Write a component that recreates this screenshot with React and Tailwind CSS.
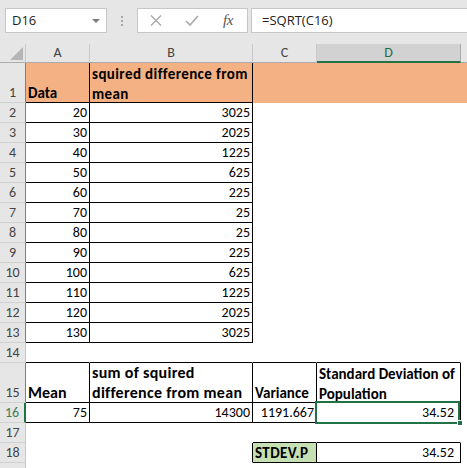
import React from "react";

const base = "flex items-end whitespace-nowrap border-r border-b";
const ALL = "border-black";
const NONE = "border-transparent";
const ONLYB = "border-r-transparent border-b-black";
const ONLYR = "border-r-black border-b-transparent";

function RH({ n, cls, txt = "text-[#444]" }) {
  return (
    <div className={`flex items-end justify-center border-b border-b-[#d0d0d0] bg-[#e6e6e6] text-[14px] leading-[14px] pb-[2px] ${cls} ${txt}`}>
      {n}
    </div>
  );
}

function C({ cls, children }) {
  return <div className={`${base} ${cls}`}>{children}</div>;
}

function Num({ cls, v, pr = "pr-[2px]" }) {
  return (
    <div className={`${base} ${cls} justify-end ${pr} leading-[14px] pb-[2px]`}>{v}</div>
  );
}

const data = [
  [20, 3025],
  [30, 2025],
  [40, 1225],
  [50, 625],
  [60, 225],
  [70, 25],
  [80, 25],
  [90, 225],
  [100, 625],
  [110, 1225],
  [120, 2025],
  [130, 3025],
];

export default function App() {
  return (
    <div className="w-[467px] h-[468px] overflow-hidden bg-white font-[Carlito,Lato,sans-serif] text-[14px] text-black">
      {/* formula bar */}
      <div className="h-[44px] bg-[#e6e6e6] flex items-start pt-[8px] font-['Open_Sans',sans-serif]">
        <div className="ml-[5px] w-[102px] h-[25px] bg-white border border-[#c6c6c6] flex items-center justify-between pl-[6px] pr-[6px]">
          <span className="text-[13px] text-[#222] leading-none">D16</span>
          <svg width="8" height="4" viewBox="0 0 8 4">
            <path d="M0 0 L8 0 L4 4 Z" fill="#7b7b7b" />
          </svg>
        </div>
        <div className="ml-[14px] mt-[8px] flex flex-col gap-[2px]">
          <div className="w-[2px] h-[2px] bg-[#a8a8a8]" />
          <div className="w-[2px] h-[2px] bg-[#a8a8a8]" />
          <div className="w-[2px] h-[2px] bg-[#a8a8a8]" />
        </div>
        <div className="ml-[14px] w-[111px] h-[25px] bg-white border border-[#c6c6c6] flex items-center pl-[12px] gap-[23px]">
          <svg width="12" height="11" viewBox="0 0 12 11">
            <path d="M1 0.5 L11 10.5 M11 0.5 L1 10.5" stroke="#a9a9a9" strokeWidth="1.4" fill="none" />
          </svg>
          <svg width="14" height="11" viewBox="0 0 14 11">
            <path d="M1 6 L5 10 L13 1" stroke="#a9a9a9" strokeWidth="1.6" fill="none" />
          </svg>
          <span className="ml-[1px] font-['Liberation_Serif',serif] italic text-[15px] text-[#555] leading-none tracking-[-0.5px]">fx</span>
        </div>
        <div className="ml-[3px] flex-1 h-[25px] bg-white border-y border-l border-[#c6c6c6] flex items-center pl-[10px]">
          <span className="text-[13px] text-[#222] leading-none">=SQRT(C16)</span>
        </div>
      </div>

      {/* grid */}
      <div className="grid grid-cols-[26px_64px_163px_64px_144px_1fr] grid-rows-[19px_40px_repeat(13,20px)_40px_20px_20px_20px_20px]">
        {/* header row */}
        <div className="relative bg-[#e6e6e6] border-r border-b border-r-[#c8c8c8] border-b-[#ababab]">
          <svg className="absolute left-[10px] top-[3px]" width="13" height="13" viewBox="0 0 13 13">
            <path d="M13 0 L13 13 L0 13 Z" fill="#b5b5b5" />
          </svg>
        </div>
        <div className="flex items-center justify-center bg-[#e6e6e6] border-r border-b border-r-[#c8c8c8] border-b-[#ababab] text-[#444] leading-none">A</div>
        <div className="flex items-center justify-center bg-[#e6e6e6] border-r border-b border-r-[#c8c8c8] border-b-[#ababab] text-[#444] leading-none">B</div>
        <div className="flex items-center justify-center bg-[#e6e6e6] border-r border-b border-r-[#c8c8c8] border-b-[#ababab] text-[#444] leading-none">C</div>
        <div className="flex items-center justify-center bg-[#d2d2d2] border-r border-r-[#ababab] border-b-2 border-b-[#217346] text-[#1e6b41] leading-none">D</div>
        <div className="bg-[#e6e6e6] border-b border-b-[#ababab]" />

        {/* row 1 */}
        <RH n="1" cls="border-r border-r-[#7f7f7f]" />
        <C cls={`${ALL} bg-[#f4b183] font-bold pl-[2px] text-[15px] leading-[14px] pb-[2px]`}>Data</C>
        <C cls={`${ALL} bg-[#f4b183] font-bold pl-[2px] text-[15px] tracking-[0.4px]`}>
          <div className="leading-[20px] mb-[-2px]">
            squired difference from
            <br />
            mean
          </div>
        </C>
        <C cls={`${NONE} bg-[#f4b183]`} />
        <C cls={`${NONE} bg-[#f4b183]`} />
        <C cls={`${NONE} bg-[#f4b183]`} />

        {/* rows 2-13 */}
        {data.map(([a, b], i) => (
          <React.Fragment key={i}>
            <RH n={i + 2} cls="border-r border-r-[#7f7f7f]" />
            <Num cls={ALL} v={a} />
            <Num cls={ALL} v={b} />
            <C cls={NONE} />
            <C cls={NONE} />
            <C cls={NONE} />
          </React.Fragment>
        ))}

        {/* row 14 */}
        <RH n="14" cls="border-r border-r-[#c8c8c8]" />
        <C cls={ONLYB} />
        <C cls={ONLYB} />
        <C cls={ONLYB} />
        <C cls={ONLYB} />
        <C cls={NONE} />

        {/* row 15 */}
        <RH n="15" cls="border-r border-r-[#7f7f7f]" />
        <C cls={`${ALL} font-bold pl-[2px] text-[16px] leading-[14px] pb-[2px]`}>Mean</C>
        <C cls={`${ALL} font-bold pl-[2px] text-[16px] tracking-[0.3px]`}>
          <div className="leading-[20px] mb-[-1px]">
            sum of squired
            <br />
            difference from mean
          </div>
        </C>
        <C cls={`${ALL} font-bold pl-[2px] text-[15px] leading-[14px] pb-[2px]`}>Variance</C>
        <C cls={`${ALL} font-bold pl-[2px] text-[15px]`}>
          <div className="leading-[20px] mb-[-2px]">
            Standard Deviation of
            <br />
            Population
          </div>
        </C>
        <C cls={NONE} />

        {/* row 16 */}
        <RH n="16" cls="bg-[#d2d2d2] border-r-2 border-r-[#217346]" txt="text-[#3f7d5a]" />
        <Num cls={ALL} v="75" />
        <Num cls={ALL} v="14300" />
        <Num cls={ALL} v="1191.667" />
        <div className={`${base} ${ALL} relative justify-end pr-[6px] leading-[14px] pb-[2px]`}>
          34.52
          <div className="absolute left-[-2px] top-[-2px] right-[0px] bottom-[-2px] border-2 border-[#217346]" />
          <div className="absolute right-[-3px] bottom-[-4px] w-[6px] h-[6px] bg-[#217346] border border-white" />
        </div>
        <C cls={NONE} />

        {/* row 17 */}
        <RH n="17" cls="border-r border-r-[#c8c8c8]" />
        <C cls={NONE} />
        <C cls={NONE} />
        <C cls={ONLYB} />
        <C cls={ONLYB} />
        <C cls={NONE} />

        {/* row 18 */}
        <RH n="18" cls="border-r border-r-[#c8c8c8]" />
        <C cls={NONE} />
        <C cls={ONLYR} />
        <C cls={`${ALL} bg-[#c6e0b4] font-bold pl-[2px] text-[15px] tracking-[0.4px] leading-[14px] pb-[2px]`}>STDEV.P</C>
        <Num cls={ALL} v="34.52" pr="pr-[6px]" />
        <C cls={NONE} />

        {/* row 19 */}
        <RH n="" cls="border-r border-r-[#c8c8c8]" />
        <C cls={NONE} />
        <C cls={NONE} />
        <C cls={NONE} />
        <C cls={NONE} />
        <C cls={NONE} />
      </div>
    </div>
  );
}
